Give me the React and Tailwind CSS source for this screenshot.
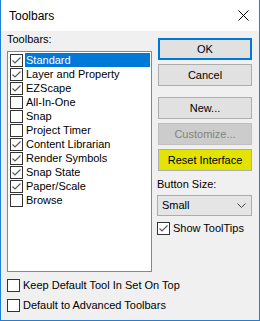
import React from 'react';

const toolbars = [
  { name: 'Standard', checked: true, selected: true },
  { name: 'Layer and Property', checked: true },
  { name: 'EZScape', checked: true },
  { name: 'All-In-One', checked: false },
  { name: 'Snap', checked: false },
  { name: 'Project Timer', checked: false },
  { name: 'Content Librarian', checked: true },
  { name: 'Render Symbols', checked: true },
  { name: 'Snap State', checked: true },
  { name: 'Paper/Scale', checked: true },
  { name: 'Browse', checked: false },
];

const CheckBox = ({ checked }) => (
  <span className="w-[13px] h-[13px] border border-[#333333] bg-white flex items-center justify-center shrink-0">
    {checked && (
      <svg width="11" height="11" viewBox="0 0 11 11">
        <path d="M1.5 5.5 L4 8 L9.5 2.5" fill="none" stroke="#5a5a5a" strokeWidth="1.2" />
      </svg>
    )}
  </span>
);

const Button = ({ children, variant = 'normal', className = '' }) => {
  const styles = {
    normal: 'border border-[#adadad] bg-[#e1e1e1] text-black',
    default: 'border-2 border-[#0078d7] bg-[#e1e1e1] text-black',
    disabled: 'border border-[#bfbfbf] bg-[#cccccc] text-[#838383]',
    marked: 'border border-[#adadad] bg-[#e3e300] text-black',
  };
  return (
    <div className={`h-[22px] w-[94px] flex items-center justify-center ${styles[variant]} ${className}`}>
      {children}
    </div>
  );
};

export default function App() {
  return (
    <div className="w-[260px] h-[321px] flex flex-col border-l border-r border-b border-[#1f7fd6] bg-[#f0f0f0] text-[11px] leading-[13px] text-black font-['Liberation_Sans',Arial,sans-serif]">
      {/* title bar */}
      <div className="h-[31px] bg-white flex items-center justify-between pl-[8px] pr-[10px] shrink-0">
        <span className="text-[12px] leading-[14px] mt-[1px]">Toolbars</span>
        <svg width="11" height="11" viewBox="0 0 11 11">
          <path d="M0.5 0.5 L10.5 10.5 M10.5 0.5 L0.5 10.5" stroke="#000" strokeWidth="1" />
        </svg>
      </div>

      <div className="flex-1 flex flex-col pl-[6px]">
        <div className="flex">
          {/* left column */}
          <div className="w-[145px] flex flex-col">
            <div className="mt-[2px] h-[13px]">Toolbars:</div>
            <div className="mt-[5px] h-[221px] border border-[#828790] bg-white pt-[1px]">
              {toolbars.map((t) => (
                <div key={t.name} className="h-[14px] flex items-center">
                  <span className="ml-[2px]">
                    <CheckBox checked={t.checked} />
                  </span>
                  <span
                    className={`ml-[2px] h-[14px] leading-[14px] pl-[1px] flex-1 mr-[1px] ${
                      t.selected ? 'bg-[#0078d7] text-white' : ''
                    }`}
                  >
                    {t.name}
                  </span>
                </div>
              ))}
            </div>
          </div>

          {/* right column */}
          <div className="ml-[6px] pt-[7px] flex flex-col">
            <Button variant="default">OK</Button>
            <Button className="mt-[4px]">Cancel</Button>
            <Button className="mt-[11px]">New...</Button>
            <Button variant="disabled" className="mt-[4px]">Customize...</Button>
            <Button variant="marked" className="mt-[4px]">Reset Interface</Button>
            <div className="mt-[7px] -ml-[1px] h-[13px]">Button Size:</div>
            <div className="mt-[4px] -ml-[1px] h-[21px] w-[95px] border border-[#acacac] bg-[#e5e5e5] flex items-center justify-between pl-[4px] pr-[5px]">
              <span>Small</span>
              <svg width="9" height="5" viewBox="0 0 9 5">
                <path d="M0.5 0.5 L4.5 4.5 L8.5 0.5" fill="none" stroke="#444" strokeWidth="1" />
              </svg>
            </div>
            <div className="mt-[6px] -ml-[1px] flex items-center">
              <CheckBox checked />
              <span className="ml-[3px]">Show ToolTips</span>
            </div>
          </div>
        </div>

        {/* bottom options */}
        <div className="mt-[7px] flex items-center">
          <CheckBox checked={false} />
          <span className="ml-[3px]">Keep Default Tool In Set On Top</span>
        </div>
        <div className="mt-[7px] flex items-center">
          <CheckBox checked={false} />
          <span className="ml-[3px]">Default to Advanced Toolbars</span>
        </div>
      </div>
    </div>
  );
}
